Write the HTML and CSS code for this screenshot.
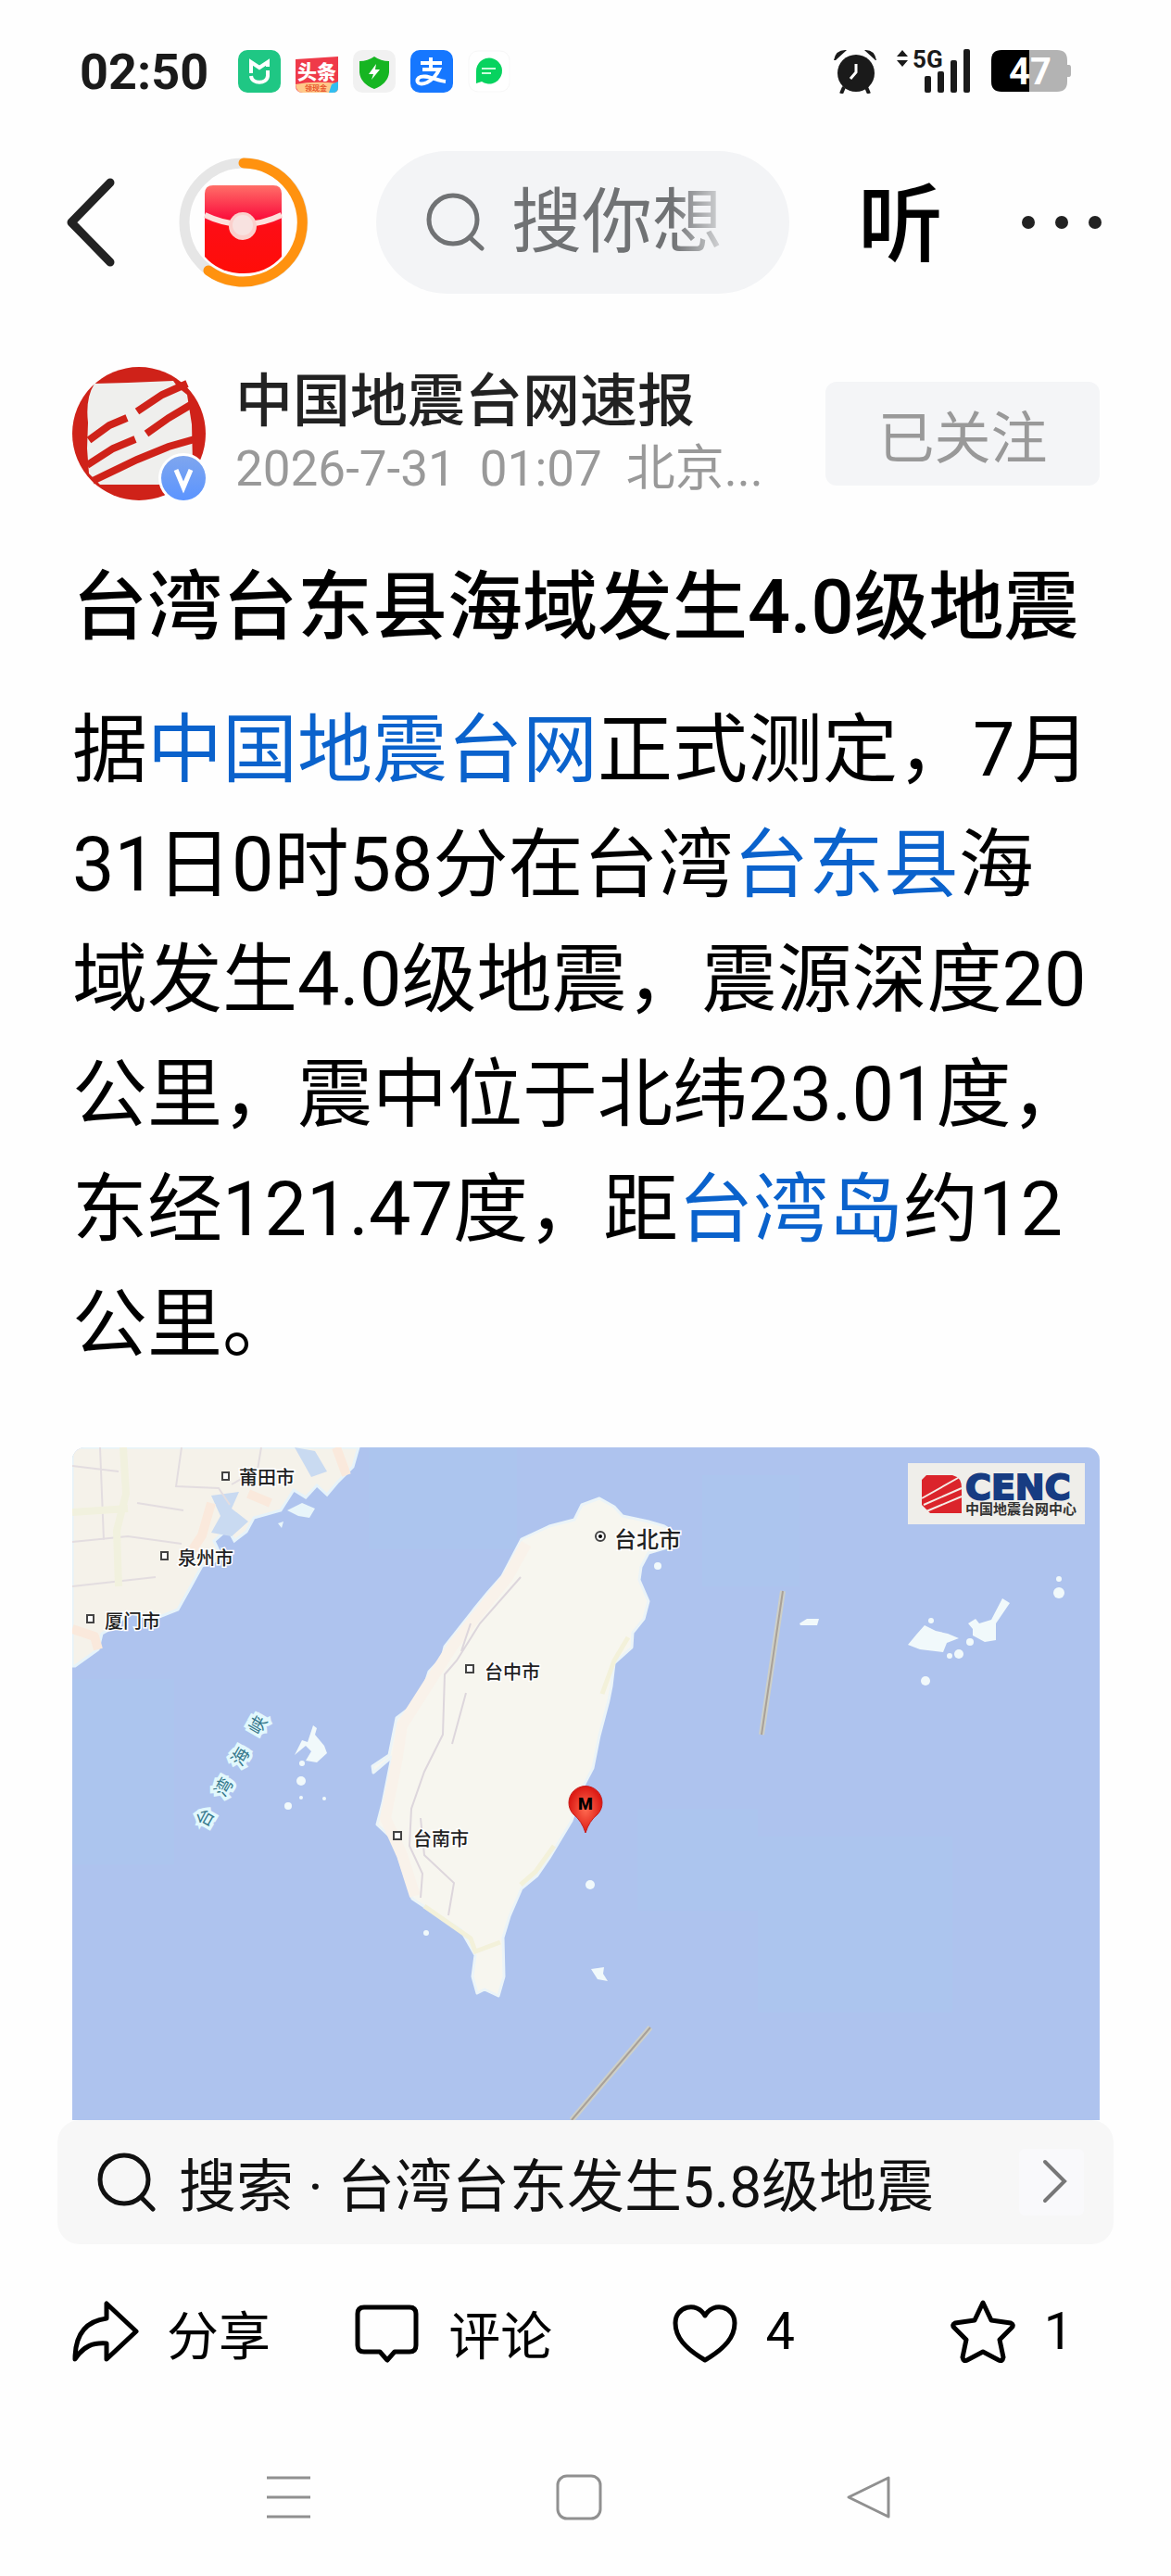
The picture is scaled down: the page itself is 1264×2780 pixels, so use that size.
FILE: index.html
```html
<!DOCTYPE html>
<html lang="zh-CN">
<head>
<meta charset="utf-8">
<meta name="viewport" content="width=device-width, initial-scale=1">
<title>台湾台东县海域发生4.0级地震</title>
<link rel="stylesheet" href="styles.css">
</head>
<body>
<div class="status">
  <span class="clock">02:50</span>
  <div class="apps">
    <svg class="app" viewBox="0 0 46 46"><rect width="46" height="46" rx="10" fill="#1fc784"/><path d="M14 25V13L23 19L32 13V18M14 28C15 37 31 37 32 28V22" fill="none" stroke="#fff" stroke-width="4"/></svg>
    <svg class="app" viewBox="0 0 46 46"><path d="M0 10L46 7V40Q46 46 40 46H8Q0 46 0 38Z" fill="#ef3a49"/><path d="M0 37Q20 33 46 36V40Q46 46 40 46H8Q1 46 0 37Z" fill="#ffc98a"/><path d="M36 46L39 37L46 34V40Q46 46 40 46Z" fill="#31bdf0"/><text x="23" y="31" font-size="21" font-weight="900" fill="#fff" text-anchor="middle">头条</text><text x="22" y="44" font-size="8" font-weight="700" fill="#e8542c" text-anchor="middle">领现金</text></svg>
    <svg class="app" viewBox="0 0 46 46"><rect width="46" height="46" rx="10" fill="#f1f1f1"/><path d="M23 7Q30 12 39 12V24Q38 36 23 42Q8 36 7 24V12Q16 12 23 7Z" fill="#16b522"/><path d="M25 15L17 26H22L20 32L29 21H24Z" fill="#fff"/></svg>
    <svg class="app" viewBox="0 0 46 46"><rect width="46" height="46" rx="10" fill="#1677ff"/><path d="M11 14H34M22 8V20M13 21H31Q27 30 18 35C9 39 5 34 9 30C15 25 28 33 38 34" fill="none" stroke="#fff" stroke-width="4"/></svg>
    <svg class="app" viewBox="0 0 46 46"><rect x="1" y="1" width="44" height="44" rx="10" fill="#fff" stroke="#f7f7f7"/><path d="M9 36V23A14 14 0 1 1 15 34Z" fill="#07d35f"/><path d="M15 20H30M15 25H25" stroke="#c9ffdc" stroke-width="2"/></svg>
  </div>
  <div class="signals">
    <svg class="alarm" viewBox="0 0 46 48" fill="#1a1a1a"><circle cx="24" cy="26" r="20"/><path d="M0 12Q2 0 14 1L2 12ZM46 12Q44 0 33 1L45 12Z"/><path d="M11 41L8 48M35 41L38 48" stroke="#1a1a1a" stroke-width="4"/><path d="M24 16V25L18 32" stroke="#fff" stroke-width="3" fill="none"/></svg>
    <svg class="bars" viewBox="0 0 80 48" fill="#1a1a1a"><path d="M0 8L6 1L12 8ZM0 12L6 19L12 12Z"/><text x="17" y="20" font-size="26" font-weight="700">5G</text><rect x="30" y="29" width="7" height="18" rx="2"/><rect x="44" y="24" width="7" height="23" rx="2"/><rect x="58" y="12" width="7" height="35" rx="2"/><rect x="72" y="0" width="7" height="47" rx="2"/></svg>
    <svg class="battery" viewBox="0 0 86 46"><path d="M41 0H71Q82 0 82 11V16H84Q86 16 86 19V26Q86 29 84 29H82V34Q82 45 71 45H41Z" fill="#b3b3b3"/><path d="M41 0H11Q0 0 0 11V34Q0 45 11 45H41Z"/><text x="42" y="37" font-size="40" font-weight="700" fill="#fff" text-anchor="middle">47</text></svg>
  </div>
</div>

<header class="top">
  <button class="icon back" aria-label="返回"><svg viewBox="0 0 52 96"><path d="M47 5L5 48L47 91" fill="none" stroke="#222" stroke-width="9" stroke-linecap="round" stroke-linejoin="round"/></svg></button>
  <button class="icon reward" aria-label="红包"><svg viewBox="0 0 140 140">
    <defs><linearGradient id="env" x1="0" y1="0" x2="0" y2="1"><stop offset="0" stop-color="#ff6f68"/><stop offset=".35" stop-color="#fb1540"/><stop offset=".45" stop-color="#fd0d16"/><stop offset="1" stop-color="#ff0d08"/></linearGradient></defs>
    <circle cx="70" cy="70" r="64" fill="none" stroke="#e6e6e6" stroke-width="11"/>
    <path d="M70 6A64 64 0 1 1 32 122" fill="none" stroke="#ff920f" stroke-width="11" stroke-linecap="round"/>
    <path d="M28 39Q28 30 37 30H102Q111 30 111 39V107Q95 125 70 125Q44 125 28 107Z" fill="url(#env)"/>
    <path d="M28 62Q70 82 111 62" fill="none" stroke="#fde0dc" stroke-width="6"/>
    <circle cx="69" cy="74" r="15" fill="#fbd0cc"/><circle cx="69" cy="73" r="11" fill="#f8e2e0"/></svg></button>
  <label class="searchbox">
    <svg viewBox="0 0 64 64"><circle cx="29" cy="29" r="26" fill="none" stroke="#707274" stroke-width="5"/><path d="M48 49L60 60" stroke="#707274" stroke-width="5" stroke-linecap="round"/></svg>
    <input type="text" placeholder="搜你想" aria-label="搜索">
  </label>
  <button class="icon listen">听</button>
  <button class="icon more" aria-label="更多"><svg viewBox="0 0 88 16" fill="#222"><circle cx="8" cy="8" r="7"/><circle cx="44" cy="8" r="7"/><circle cx="80" cy="8" r="7"/></svg></button>
</header>

<main class="article">
  <section class="author">
    <svg class="avatar" viewBox="0 0 144 144">
      <defs><linearGradient id="vip" x1="0" y1="0" x2="0" y2="1"><stop offset="0" stop-color="#7fa6ee"/><stop offset="1" stop-color="#5b94ff"/></linearGradient></defs>
      <circle cx="72" cy="72" r="72" fill="#cf2219"/>
      <path d="M24 18L60 17L109 15L114 22L124 30L129 62L130 106L98 127L30 127L18 115L16 88L17 60Q14 34 24 18Z" fill="#efefed"/>
      <path d="M124 18L97 30L70 48M59 55L40 63L18 79M131 39L104 55L80 72M68 78L44 88L16 106M132 78L104 86L70 100L22 123" fill="none" stroke="#cf2219" stroke-width="8"/>
      <circle cx="120" cy="120" r="27" fill="#fff"/><circle cx="120" cy="120" r="24" fill="url(#vip)"/>
      <path d="M112 111L120 130L128 111" fill="none" stroke="#fff" stroke-width="5"/>
    </svg>
    <div class="who">
      <h2>中国地震台网速报</h2>
      <p><span>2026-7-31</span><span>01:07</span><span>北京...</span></p>
    </div>
    <button class="follow">已关注</button>
  </section>

  <h1>台湾台东县海域发生4.0级地震</h1>
  <p class="body">据<a href="#">中国地震台网</a>正式测定，7月31日0时58分在台湾<a href="#">台东县</a>海域发生4.0级地震，震源深度20公里，震中位于北纬23.01度，东经121.47度，距<a href="#">台湾岛</a>约12公里。</p>

  <svg class="map" viewBox="0 0 1109 726" role="img" aria-label="震中位置地图">
    <defs>
      <radialGradient id="pin"><stop offset="0" stop-color="#ff6a50"/><stop offset="1" stop-color="#dc1a14"/></radialGradient>
    </defs>
    <rect width="1109" height="726" fill="#aec3ee"/>
    <g fill="#acc5ee"><rect x="320" width="160" height="110"/><rect y="250" width="110" height="200"/><rect x="680" y="30" width="105" height="120"/><rect x="610" y="390" width="130" height="110"/><rect x="740" y="420" width="210" height="190"/></g>
    <!-- mainland coast -->
    <path d="M0 0H309L303 21L286 38L275 51L264 41L252 54L239 46L225 68L196 76L188 91L175 101L168 88L153 101L162 120L140 128L128 150L114 175L89 185L60 178L48 192L32 201L28 218L3 236H0Z" fill="#f5f2ea" stroke="#e6f3fa" stroke-width="3"/>
    <path d="M150 52L180 48L172 66L190 80L172 96L150 92L160 74ZM240 0L262 4L275 26L258 32Z" fill="#c9daf1"/>
    <path d="M0 20L50 26M118 0L112 42L158 44L170 62M0 102L60 96L118 104M0 150L90 140M204 0L200 24L172 40M70 60L120 68M30 0L34 100" fill="none" stroke="#e3dde0" stroke-width="2"/>
    <path d="M55 0L58 50L48 90L50 150M0 70L60 66" fill="none" stroke="#f1f1de" stroke-width="8"/>
    <path d="M150 60L140 95L120 125M0 196L24 204L28 218M214 60L190 50M285 0L296 30" fill="none" stroke="#fae9dc" stroke-width="10" stroke-linejoin="round"/>
    <path d="M232 68L248 60L262 66L256 76L244 74ZM222 82L228 80L226 87Z" fill="#e8f5fa"/>
    <!-- main island -->
    <path d="M569 55L585 64L594 74L622 80L639 85L652 93L649 106L622 114L614 129L612 143L622 166L617 185L605 200L604 216L585 233L582 258L579 273L569 311L562 346L552 365L539 403L515 443L502 462L485 476L472 506L465 529L466 571L460 592L445 585L437 589L432 571L435 548L419 520L385 499L367 487L352 441L345 422L329 407L335 384L345 334L325 351L324 344L342 332L350 292L375 273L385 242L399 227L402 215L435 173L449 156L464 139L485 99L515 85L542 78L550 62Z" fill="#f7f6ef" stroke="#ebf4f8" stroke-width="3" stroke-linejoin="round"/>
    <path d="M490 104L470 140L410 215L388 250L356 300L350 340L338 400L356 440L370 484" fill="none" stroke="#f9f2ea" stroke-width="12"/>
    <path d="M484 140L440 190L415 230L402 245L400 310L380 350L366 390L364 430L378 460L376 486M376 400L380 440L412 470L406 505M430 190L420 220M425 265L410 320" fill="none" stroke="#ddd6dc" stroke-width="2"/>
    <path d="M380 495L430 530L435 544L462 534M520 430L500 458L484 472M600 205L585 230L572 266" fill="none" stroke="#f3f1da" stroke-width="5"/>
    <!-- small islands -->
    <g fill="#f1f9fb">
      <circle cx="632" cy="128" r="4"/><circle cx="559" cy="472" r="5"/><path d="M560 563L574 561L573 568L578 576L567 574Z"/><circle cx="382" cy="524" r="3"/>
      <path d="M785 190L793 185L806 185L804 192H786Z"/>
      <path d="M902 213L912 201L920 192L932 198L945 201L957 206L944 211L940 221L915 218Z"/>
      <path d="M967 190L975 185L979 190L992 186L1004 163L1012 168L997 190V208L985 210L972 203V196Z"/>
      <circle cx="957" cy="223" r="5"/><circle cx="947" cy="225" r="3"/><circle cx="969" cy="210" r="4"/><circle cx="921" cy="252" r="5"/><circle cx="1065" cy="157" r="6"/><circle cx="1065" cy="142" r="3"/><circle cx="927" cy="187" r="3"/>
      <path d="M260 300L264 303L262 310L272 322L275 330L264 340L252 338L258 328L252 322L240 332L248 316L254 318Z"/>
      <circle cx="247" cy="360" r="5"/><circle cx="233" cy="387" r="4"/><circle cx="247" cy="378" r="2"/><circle cx="272" cy="379" r="2"/><circle cx="248" cy="341" r="3"/>
    </g>
    <path d="M767 155L744 310M624 626L539 726" stroke="#cdcfc8" stroke-width="6"/>
    <path d="M767 155L744 310M624 626L539 726" stroke="#a9a198" stroke-width="2"/>
    <!-- cities -->
    <g fill="#fff" stroke="#444" stroke-width="2"><rect x="162" y="27" width="7" height="8"/><rect x="96" y="113" width="7" height="8"/><rect x="16" y="181" width="7" height="8"/><rect x="425" y="235" width="8" height="8"/><rect x="347" y="415" width="8" height="8"/><circle cx="570" cy="96" r="5"/></g>
    <circle cx="570" cy="96" r="2"/>
    <g class="city"><text x="180" y="40">莆田市</text><text x="114" y="127">泉州市</text><text x="35" y="195">厦门市</text><text x="445" y="250">台中市</text><text x="368" y="430">台南市</text><text class="capital" x="585" y="108">台北市</text></g>
    <g class="strait"><text transform="translate(144 400) rotate(-60)" y="6">台</text><text transform="translate(164 367) rotate(-60)" y="6">湾</text><text transform="translate(182 334) rotate(-60)" y="6">海</text><text transform="translate(201 300) rotate(-60)" y="6">峡</text></g>
    <path d="M554 416Q550 403 541 396A18 18 0 1 1 567 396Q558 403 554 416Z" fill="url(#pin)" stroke="#c81a18"/>
    <text x="554" y="391" font-size="18" font-weight="900" text-anchor="middle">M</text>
    <!-- agency logo -->
    <rect x="902" y="17" width="191" height="66" fill="#efeeea"/>
    <path d="M922 30H950Q960 32 960 44V71H926L917 62V35Z" fill="#db242b"/>
    <path d="M956 33L917 55M960 44L919 62M960 53L922 69" stroke="#f5ebe6" stroke-width="2"/>
    <text class="cenc" x="964" y="56">CENC</text><text class="cenc-cn" x="964" y="72">中国地震台网中心</text>
  </svg>
</main>

<a class="related" href="#">
  <svg class="lens" viewBox="0 0 64 64"><circle cx="29" cy="29" r="26" fill="none" stroke="#111" stroke-width="5"/><path d="M48 49L60 61" stroke="#111" stroke-width="5" stroke-linecap="round"/></svg>
  <span>搜索 · 台湾台东发生5.8级地震</span>
  <svg class="chev" viewBox="0 0 70 72"><rect width="70" height="72" rx="6" fill="#f9f9fb"/><path d="M28 14L49 35L28 56" fill="none" stroke="#777" stroke-width="4" stroke-linecap="round"/></svg>
</a>

<div class="actions">
  <button><svg viewBox="0 0 72 68"><path d="M37 4V20C14 23 3 38 3 64C12 50 22 46 37 47V64L69 34Z"/></svg>分享</button>
  <button><svg viewBox="0 0 72 68"><path d="M11 8H60Q67 8 67 15V49Q67 56 60 56H44L36 65L28 56H11Q4 56 4 49V15Q4 8 11 8Z"/></svg>评论</button>
  <button><svg viewBox="0 0 72 68"><path d="M36 65C14 52 4 40 4 25C4 7 27 1 36 17C45 1 68 7 68 25C68 40 58 52 36 65Z"/></svg>4</button>
  <button><svg viewBox="0 0 72 68"><path d="M36 3L45 22L66 25Q70 27 67 30L54 43L58 62Q57 67 53 65L36 56L19 65Q15 67 14 62L18 43L5 30Q2 27 6 25L27 22Z"/></svg>1</button>
</div>

<nav class="sysnav">
  <button aria-label="最近任务"><svg viewBox="0 0 50 50"><path d="M1 4H48M1 25H48M1 46H48"/></svg></button>
  <button aria-label="主屏幕"><svg viewBox="0 0 50 50"><rect x="2" y="2" width="46" height="46" rx="10"/></svg></button>
  <button aria-label="后退"><svg viewBox="0 0 50 50"><path d="M46 4V46L3 25Z"/></svg></button>
</nav>
</body>
</html>
```
FILE: styles.css
```css
* { box-sizing: border-box; }
body {
  margin: 0;
  background: #fefefe;
  color: #000;
  font-family: Roboto, "Noto Sans CJK SC", sans-serif;
}
svg { display: block; flex: none; }
h1, h2, p { margin: 0; }
a { color: #0a62cc; text-decoration: none; }
button { border: 0; padding: 0; background: none; color: inherit; font-family: inherit; }

.status { display: flex; align-items: center; height: 154px; padding: 0 108px 0 86px; }
.clock { width: 171px; font-size: 54px; font-weight: 700; color: #1a1a1a; }
.apps { display: flex; gap: 16px; }
.app { width: 46px; height: 46px; }
.signals { display: flex; align-items: center; gap: 22px; margin-left: auto; }
.alarm { width: 46px; height: 48px; }
.bars { width: 80px; height: 48px; overflow: visible; }
.battery { width: 86px; height: 46px; }

.top { display: flex; align-items: center; margin-top: 9px; padding: 0 74px 0 72px; }
.icon { flex: none; }
.back { width: 52px; margin-right: 69px; }
.reward { width: 140px; margin-right: 73px; }
.searchbox {
  display: flex;
  flex: 1;
  align-items: center;
  gap: 28px;
  min-width: 0;
  height: 154px;
  padding: 0 68px 0 54px;
  border-radius: 77px;
  background: #f3f4f6;
}
.searchbox svg { width: 64px; height: 64px; }
.searchbox input {
  flex: 1;
  min-width: 0;
  height: 110px;
  padding: 0;
  border: 0;
  outline: 0;
  background: none;
  font-family: inherit;
  font-size: 76px;
  -webkit-mask-image: linear-gradient(90deg, #000 75%, transparent 105%);
  mask-image: linear-gradient(90deg, #000 75%, transparent 105%);
}
.searchbox input::placeholder { color: #707274; opacity: 1; }
.listen { margin: 0 84px 0 74px; padding-top: 8px; font-size: 92px; font-weight: 500; line-height: 120px; }
.more { width: 88px; }

.article { padding: 79px 77px 0 78px; }
.author { display: flex; align-items: center; }
.avatar { width: 144px; height: 144px; }
.who { flex: 1; min-width: 0; margin-left: 32px; white-space: nowrap; }
.who h2 { font-size: 62px; font-weight: 500; line-height: 76px; color: #222; }
.who p { display: flex; gap: 26px; font-size: 53px; line-height: 68px; color: #999; }
.follow {
  width: 296px;
  height: 112px;
  border-radius: 12px;
  background: #f4f5f7;
  color: #999;
  font-size: 61px;
}
h1 { margin-top: 56px; font-size: 81px; font-weight: 500; line-height: 120px; white-space: nowrap; }
.body { margin-top: 32px; font-size: 81px; line-height: 124px; }
.map { width: 100%; height: auto; margin-top: 70px; border-radius: 14px 14px 0 0; }
.city { font-size: 20px; font-weight: 500; fill: #222; stroke: #fff; stroke-width: 3px; paint-order: stroke; }
.capital { font-size: 24px; }
.strait { font-size: 19px; text-anchor: middle; fill: #37788c; stroke: #e2f8fd; stroke-width: 7px; paint-order: stroke; }
.cenc { font-family: "DejaVu Sans", sans-serif; font-size: 38px; font-weight: 700; fill: #173c82; stroke: #173c82; stroke-width: 2px; }
.cenc-cn { font-size: 15px; font-weight: 700; fill: #333; }

.related {
  display: flex;
  align-items: center;
  height: 134px;
  margin: 0 62px;
  padding: 0 32px 0 43px;
  border-radius: 24px;
  background: #f7f7f7;
  color: #111;
  font-size: 62px;
  white-space: nowrap;
}
.related span { flex: 1; margin-left: 24px; }
.lens { width: 64px; height: 64px; }
.chev { width: 70px; height: 72px; }

.actions {
  display: grid;
  grid-template-columns: 304fr 342fr 300fr 162fr;
  margin-top: 34px;
  padding: 0 77px 0 78px;
}
.actions button { display: flex; align-items: center; gap: 30px; height: 120px; font-size: 56px; }
.actions svg { width: 72px; height: 68px; fill: none; stroke: #000; stroke-width: 5px; stroke-linejoin: round; }

.sysnav { display: grid; grid-template-columns: repeat(3, 1fr); margin-top: 59px; padding: 0 170px 0 156px; }
.sysnav button { display: flex; align-items: center; justify-content: center; height: 120px; }
.sysnav svg { width: 50px; height: 50px; fill: none; stroke: #909090; stroke-width: 3px; stroke-linejoin: round; }
```
